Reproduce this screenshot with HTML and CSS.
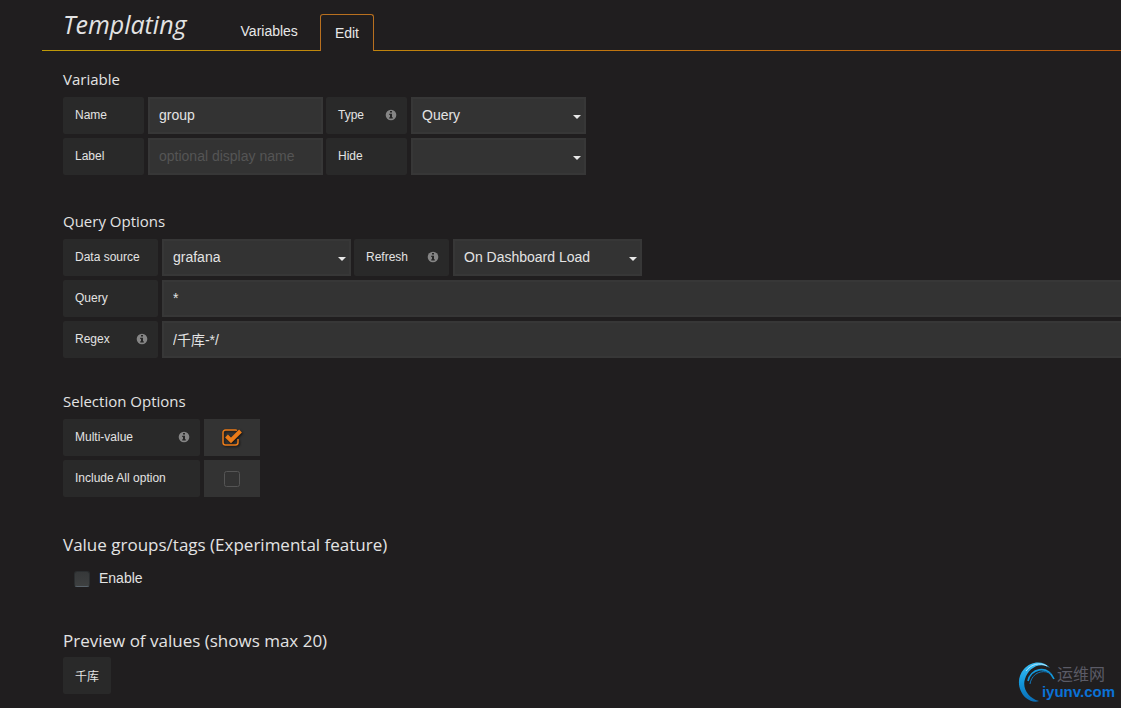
FILE: index.html
```html
<!DOCTYPE html>
<html lang="en">
<head>
  <meta charset="UTF-8" />
  <meta name="viewport" content="width=device-width,initial-scale=1.0" />
  <title>Templating</title>
  <link rel="stylesheet" href="styles.css">
</head>
<body>
  <svg class="sprite" aria-hidden="true">
    <symbol id="icon-info" viewBox="0 0 12 12">
      <circle cx="6" cy="6" r="5.3" fill="#858585" />
      <path d="M5 2h2v1.600H5zM4.200 4.800H7v3.500h.8v1.300H4.200V8.300H5V6.100h-.8z" fill="#262626" />
    </symbol>
  </svg>

  <header class="tabs-header">
    <h1>Templating</h1>
    <nav class="tabs">
      <a class="tab" href="#variables">Variables</a>
      <a class="tab active" href="#edit">Edit</a>
    </nav>
  </header>

  <main class="editor">
    <form action="">
      <section class="section">
        <h2>Variable</h2>
        <div class="row">
          <label class="item" for="name">Name</label>
          <input class="field" id="name" type="text" value="group" autocomplete="off" />
          <label class="item" for="type">Type <svg class="info" aria-hidden="true"><use href="#icon-info" /></svg></label>
          <select class="field" id="type"><option>Query</option></select>
        </div>
        <div class="row">
          <label class="item" for="label">Label</label>
          <input class="field" id="label" type="text" placeholder="optional display name" autocomplete="off" />
          <label class="item" for="hide">Hide</label>
          <select class="field" id="hide"><option></option></select>
        </div>
      </section>

      <section class="section query">
        <h2>Query Options</h2>
        <div class="row">
          <label class="item" for="datasource">Data source</label>
          <select class="field" id="datasource"><option>grafana</option></select>
          <label class="item" for="refresh">Refresh <svg class="info" aria-hidden="true"><use href="#icon-info" /></svg></label>
          <select class="field" id="refresh"><option>On Dashboard Load</option></select>
        </div>
        <div class="row">
          <label class="item" for="query">Query</label>
          <input class="field wide" id="query" type="text" value="*" autocomplete="off" />
        </div>
        <div class="row">
          <label class="item" for="regex">Regex <svg class="info" aria-hidden="true"><use href="#icon-info" /></svg></label>
          <input class="field wide" id="regex" type="text" value="/千库-*/" autocomplete="off" />
        </div>
      </section>

      <section class="section selection">
        <h2>Selection Options</h2>
        <div class="row">
          <label class="item" for="multi">Multi-value <svg class="info" aria-hidden="true"><use href="#icon-info" /></svg></label>
          <div class="check-cell">
            <input id="multi" type="checkbox" checked />
            <svg class="check-icon" viewBox="0 0 24 24" aria-hidden="true">
              <path class="box" d="M18 13v3.500a2.500 2.500 0 0 1-2.500 2.500h-10A2.500 2.500 0 0 1 3 16.500v-10A2.500 2.500 0 0 1 5.500 4h10q1 0 1.500.500" />
              <path class="tick" d="M6.500 10l4.500 4.500L20.500 5" />
            </svg>
          </div>
        </div>
        <div class="row">
          <label class="item" for="all">Include All option</label>
          <div class="check-cell">
            <input id="all" type="checkbox" />
            <svg class="check-icon" viewBox="0 0 24 24" aria-hidden="true">
              <rect class="box" x="4.500" y="4.500" width="15" height="15" rx="2" />
              <path class="tick" d="M6.500 10l4.500 4.500L20.500 5" />
            </svg>
          </div>
        </div>
      </section>

      <section class="section groups">
        <h2 class="large">Value groups/tags (Experimental feature)</h2>
        <label class="enable"><input type="checkbox" /> Enable</label>
      </section>

      <section class="section">
        <h2 class="large">Preview of values (shows max 20)</h2>
        <div class="row">
          <span class="item value">千库</span>
        </div>
      </section>
    </form>
  </main>

  <div class="watermark">
    <svg class="swirl" viewBox="0 0 40 42" aria-hidden="true">
      <defs>
        <linearGradient id="swirlFill" x1="0" y1="0" x2="0" y2="1">
          <stop offset="0" stop-color="#3dc0f5" />
          <stop offset="0.5" stop-color="#1398dc" />
          <stop offset="1" stop-color="#0a6cb4" />
        </linearGradient>
      </defs>
      <path d="M32 7C25-1 13 0 6 8C-2 17 0 30 8 37C12 40 17 42 21 40C10 37 4 27 7 18C10 8 21 0 32 7z" fill="url(#swirlFill)" />
      <path d="M10 20C12 8 29 3 36 18" fill="none" stroke="#1398dc" stroke-width="1.6" />
      <path d="M12 23C14 11 26 8 33 13" fill="none" stroke="#1279bd" stroke-width="1" />
      <path d="M8 10C13 3 22 1 29 5" fill="none" stroke="#c9edff" stroke-width="0.8" />
    </svg>
    <div class="watermark-text">
      <span class="cn">运维网</span>
      <span class="domain">iyunv.com</span>
    </div>
  </div>
</body>
</html>
```

FILE: styles.css
```css
* {
  box-sizing: border-box;
}

body {
  margin: 0;
  min-height: 100vh;
  position: relative;
  background: #201e1f;
  color: #e3e3e3;
  font-family: "Liberation Sans", Arial, "Noto Sans CJK SC", sans-serif;
  font-size: 14px;
}

.sprite {
  display: none;
}

.tabs-header {
  display: flex;
  align-items: flex-end;
  height: 51px;
  margin-left: 42px;
  padding-left: 21px;
  background: linear-gradient(to right, #bf9a08, #c07010 60%, #b8580c) bottom / 100% 1px no-repeat;
}

.tabs-header h1 {
  margin: 0 34px 10px 0;
  font-family: "Open Sans", sans-serif;
  font-size: 25px;
  font-style: italic;
  font-weight: 400;
  line-height: 34px;
}

.tabs {
  display: flex;
  align-items: flex-end;
}

.tab {
  padding: 8px 22px 11px 20px;
  color: #e8e8e8;
  line-height: 18px;
  text-decoration: none;
}

.tab.active {
  padding: 9px 14px;
  border: 1px solid #b8701f;
  border-bottom: none;
  border-radius: 3px 3px 0 0;
  background: #201e1f;
}

.editor {
  padding: 16px 0 0 63px;
}

.section {
  margin-bottom: 34px;
}

.section:last-child {
  margin-bottom: 0;
}

.section.query {
  margin-bottom: 31px;
}

.section.selection {
  margin-bottom: 36px;
}

.section.groups {
  margin-bottom: 35px;
}

h2 {
  margin: 0 0 6px;
  font-family: "Open Sans", sans-serif;
  font-size: 15px;
  font-weight: 400;
  line-height: 24px;
}

h2.large {
  font-size: 17px;
  margin-bottom: 4px;
}

.row {
  display: flex;
  margin-bottom: 4px;
}

.row:last-child {
  margin-bottom: 0;
}

.item {
  display: flex;
  flex-shrink: 0;
  align-items: center;
  justify-content: space-between;
  width: 81px;
  height: 37px;
  margin-right: 4px;
  padding: 0 10px 1px 12px;
  border-radius: 2px;
  background: #292929;
  font-size: 12px;
}

.query .item {
  width: 95px;
}

.selection .item {
  width: 137px;
}

.item.value {
  width: auto;
  padding-right: 12px;
}

.info {
  width: 12px;
  height: 12px;
}

.field {
  width: 175px;
  height: 37px;
  margin: 0 3px 0 0;
  padding: 0 9px 1px;
  border: 2px solid #373737;
  border-radius: 0;
  outline: none;
  background-color: #333;
  color: #e3e3e3;
  font: inherit;
}

.field::placeholder {
  color: #555;
  opacity: 1;
}

.query .field {
  width: 189px;
}

.query .field.wide {
  flex: 1;
  margin-right: 0;
  border-right: none;
}

select.field {
  appearance: none;
  background-image: url("data:image/svg+xml,%3Csvg xmlns='http://www.w3.org/2000/svg' width='8' height='4'%3E%3Cpath d='M0 0h8L4 4z' fill='%23e8e8e8'/%3E%3C/svg%3E");
  background-position: right 3px top 16px;
  background-repeat: no-repeat;
}

.check-cell {
  display: grid;
  place-items: center;
  width: 56px;
  height: 37px;
  background: #333;
}

.check-cell input {
  grid-area: 1 / 1;
  width: 100%;
  height: 100%;
  margin: 0;
  appearance: none;
}

.check-icon {
  grid-area: 1 / 1;
  width: 24px;
  height: 24px;
  fill: none;
  pointer-events: none;
}

.check-icon .box {
  stroke: #555;
  stroke-width: 1;
}

.check-icon .tick {
  display: none;
  stroke: #eb7b18;
  stroke-width: 4;
}

input:checked + .check-icon {
  filter: drop-shadow(1px 1px 1px #111);
}

input:checked + .check-icon .box {
  stroke: #eb7b18;
  stroke-width: 1.5;
}

input:checked + .check-icon .tick {
  display: inline;
}

.enable {
  display: flex;
  align-items: center;
  gap: 9px;
  height: 28px;
  margin-top: 9px;
  padding: 0 0 4px 11px;
}

.enable input {
  width: 16px;
  height: 16px;
  margin: 2px 0 0;
  appearance: none;
  border: 1px solid #2b2e30;
  border-bottom-color: #59636b;
  border-radius: 3px;
  background: linear-gradient(#363839, #3e4040);
}

.watermark {
  display: flex;
  position: absolute;
  right: 6px;
  bottom: 5px;
}

.swirl {
  width: 40px;
  height: 42px;
  margin-right: -16px;
}

.watermark-text {
  display: flex;
  flex-direction: column;
  align-items: flex-end;
  padding-top: 5px;
}

.cn {
  margin-right: 10px;
  color: #5b5b66;
  font-size: 16px;
  line-height: 18px;
}

.domain {
  color: #0b72d6;
  font-size: 15px;
  font-weight: 700;
  line-height: 16px;
}
```
